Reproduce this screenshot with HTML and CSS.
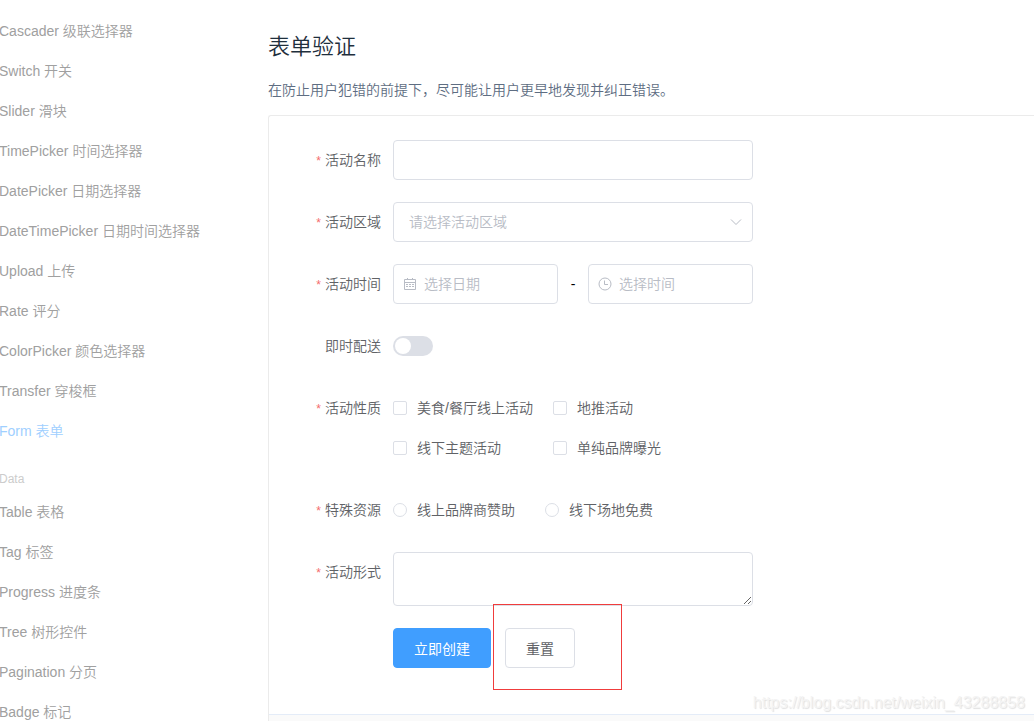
FILE: index.html
```html
<!DOCTYPE html>
<html lang="zh-CN">
<head>
<meta charset="utf-8">
<title>表单验证</title>
<link rel="stylesheet" href="styles.css">
</head>
<body>
<div class="page">
  <nav class="sidebar">
    <ul class="nav-list">
      <li><a class="nav-link" href="#">Cascader 级联选择器</a></li>
      <li><a class="nav-link" href="#">Switch 开关</a></li>
      <li><a class="nav-link" href="#">Slider 滑块</a></li>
      <li><a class="nav-link" href="#">TimePicker 时间选择器</a></li>
      <li><a class="nav-link" href="#">DatePicker 日期选择器</a></li>
      <li><a class="nav-link" href="#">DateTimePicker 日期时间选择器</a></li>
      <li><a class="nav-link" href="#">Upload 上传</a></li>
      <li><a class="nav-link" href="#">Rate 评分</a></li>
      <li><a class="nav-link" href="#">ColorPicker 颜色选择器</a></li>
      <li><a class="nav-link" href="#">Transfer 穿梭框</a></li>
      <li><a class="nav-link active" href="#">Form 表单</a></li>
    </ul>
    <div class="nav-title">Data</div>
    <ul class="nav-list">
      <li><a class="nav-link" href="#">Table 表格</a></li>
      <li><a class="nav-link" href="#">Tag 标签</a></li>
      <li><a class="nav-link" href="#">Progress 进度条</a></li>
      <li><a class="nav-link" href="#">Tree 树形控件</a></li>
      <li><a class="nav-link" href="#">Pagination 分页</a></li>
      <li><a class="nav-link" href="#">Badge 标记</a></li>
    </ul>
  </nav>
  <main class="content">
    <h2 class="title">表单验证</h2>
    <p class="desc">在防止用户犯错的前提下，尽可能让用户更早地发现并纠正错误。</p>
    <section class="demo">
      <form class="form">
        <div class="item">
          <label class="label required" for="name">活动名称</label>
          <div class="field"><input class="input" id="name" type="text"></div>
        </div>
        <div class="item">
          <label class="label required" for="region">活动区域</label>
          <div class="field select-wrap">
            <select class="input select" id="region"><option>请选择活动区域</option></select>
            <svg class="chevron" viewBox="0 0 14 14"><path d="M2 4.5l5 5 5-5"/></svg>
          </div>
        </div>
        <div class="item">
          <label class="label required" for="date">活动时间</label>
          <div class="field dates">
            <div class="picker">
              <svg class="icon" viewBox="0 0 14 14"><path d="M1.5 2.5h11v10h-11zM1.5 5.5h11M4.5 1v2M9.5 1v2"/><path d="M3 7.5h2M6 7.5h2M9 7.5h2M3 9.5h2M6 9.5h2M9 9.5h2"/></svg>
              <input class="input with-icon" id="date" type="text" placeholder="选择日期">
            </div>
            <span class="dash">-</span>
            <div class="picker">
              <svg class="icon" viewBox="0 0 14 14"><circle cx="7" cy="7" r="6"/><path d="M6.5 3.5v4h3.5"/></svg>
              <input class="input with-icon" type="text" placeholder="选择时间" aria-label="选择时间">
            </div>
          </div>
        </div>
        <div class="item">
          <label class="label" for="delivery">即时配送</label>
          <div class="field"><input class="switch" id="delivery" type="checkbox" role="switch"></div>
        </div>
        <div class="item">
          <span class="label required">活动性质</span>
          <div class="field checks">
            <label class="choice"><input class="box" type="checkbox">美食/餐厅线上活动</label>
            <label class="choice"><input class="box" type="checkbox">地推活动</label>
            <label class="choice"><input class="box" type="checkbox">线下主题活动</label>
            <label class="choice"><input class="box" type="checkbox">单纯品牌曝光</label>
          </div>
        </div>
        <div class="item">
          <span class="label required">特殊资源</span>
          <div class="field radios">
            <label class="choice"><input class="box round" type="radio" name="resource">线上品牌商赞助</label>
            <label class="choice"><input class="box round" type="radio" name="resource">线下场地免费</label>
          </div>
        </div>
        <div class="item">
          <label class="label required" for="detail">活动形式</label>
          <div class="field"><textarea class="input textarea" id="detail" rows="2"></textarea></div>
        </div>
        <div class="actions">
          <button class="button primary" type="button">立即创建</button>
          <button class="button" type="button">重置</button>
          <div class="highlight"></div>
        </div>
      </form>
      <div class="demo-meta"></div>
    </section>
  </main>
</div>
<div class="watermark">https://blog.csdn.net/weixin_43288858</div>
</body>
</html>
```
FILE: styles.css
```css
* {
  box-sizing: border-box;
}

body {
  margin: 0;
  background: #fff;
  color: #606266;
  font-family: "Liberation Sans", "Noto Sans CJK SC", sans-serif;
  font-size: 14px;
  font-weight: 350;
}

.page {
  display: flex;
  height: 100vh;
  overflow: hidden;
}

.sidebar {
  flex: 0 0 237px;
  margin-left: -1px;
  padding-top: 11px;
}

.nav-list {
  margin: 0;
  padding: 0;
  list-style: none;
}

.nav-link {
  display: block;
  color: #a0a0a0;
  line-height: 40px;
  text-decoration: none;
  white-space: nowrap;
}

.nav-link.active {
  color: #9fcfff;
}

.nav-title {
  padding-top: 15px;
  color: #ccc;
  font-size: 12px;
  line-height: 26px;
}

.content {
  flex: 1;
  min-width: 0;
  padding: 32px 0 0 32px;
}

.title {
  margin: 0 0 16px;
  color: #1f2f3d;
  font-size: 22px;
  font-weight: 350;
  line-height: 30px;
}

.desc {
  margin: 0 0 13px;
  color: #5e6d82;
  line-height: 24px;
}

.demo {
  border: 1px solid #ebebeb;
  border-right: 0;
  border-radius: 3px 0 0 0;
}

.form {
  width: 100%;
  max-width: 508px;
  padding: 24px;
}

.item {
  display: flex;
  margin-bottom: 22px;
}

.label {
  flex: 0 0 100px;
  padding-right: 12px;
  line-height: 40px;
  text-align: right;
}

.required::before {
  content: "*";
  margin-right: 4px;
  color: #f56c6c;
  font-size: 12px;
  line-height: 1;
}

.field {
  display: flex;
  flex: 1;
  align-items: center;
  min-width: 0;
  min-height: 40px;
}

.input {
  width: 100%;
  height: 40px;
  padding: 0 15px;
  border: 1px solid #dcdfe6;
  border-radius: 4px;
  outline: none;
  background: #fff;
  color: #606266;
  font: inherit;
}

.input::placeholder {
  color: #b8bcc5;
}

.select-wrap,
.picker {
  position: relative;
}

.select {
  appearance: none;
  color: #b8bcc5;
}

.chevron,
.icon {
  position: absolute;
  top: 13px;
  width: 14px;
  height: 14px;
  fill: none;
  stroke: #b8bcc5;
}

.chevron {
  right: 10px;
}

.icon {
  left: 10px;
}

.with-icon {
  padding-left: 30px;
}

.dates {
  display: grid;
  grid-template-columns: 11fr 2fr 11fr;
}

.dash {
  color: #000;
  text-align: center;
}

.switch {
  display: flex;
  align-items: center;
  width: 40px;
  height: 20px;
  margin: 0;
  padding: 2px;
  border-radius: 10px;
  appearance: none;
  background: #dcdfe6;
}

.switch::before {
  content: "";
  width: 16px;
  height: 16px;
  border-radius: 50%;
  background: #fff;
}

.checks {
  display: grid;
  grid-template-columns: 160px 1fr;
}

.radios {
  gap: 30px;
}

.choice {
  display: flex;
  align-items: center;
  gap: 10px;
  line-height: 40px;
  white-space: nowrap;
}

.box {
  flex: none;
  width: 14px;
  height: 14px;
  margin: 0;
  border: 1px solid #dcdfe6;
  border-radius: 2px;
  appearance: none;
  background: #fff;
}

.round {
  border-radius: 50%;
}

.textarea {
  display: block;
  height: auto;
  padding: 5px 15px;
  line-height: 21px;
  resize: vertical;
}

.actions {
  position: relative;
  display: flex;
  gap: 14px;
  margin: 0 0 22px 100px;
}

.button {
  height: 40px;
  padding: 0 20px;
  border: 1px solid #dcdfe6;
  border-radius: 4px;
  background: #fff;
  color: #606266;
  font: inherit;
  font-weight: 400;
}

.primary {
  border-color: #409eff;
  background: #409eff;
  color: #fff;
}

.highlight {
  position: absolute;
  top: -24px;
  left: 100px;
  width: 129px;
  height: 86px;
  border: 1px solid #f03c3c;
  pointer-events: none;
}

.demo-meta {
  height: 40px;
  border-top: 1px solid #e4ecf8;
  background: #fafafa;
}

.watermark {
  position: absolute;
  right: 9px;
  bottom: 8px;
  color: #f4f4f4;
  font-size: 16px;
  line-height: 20px;
  text-shadow: 1px 1px 1px #e0e0e0;
}
```
